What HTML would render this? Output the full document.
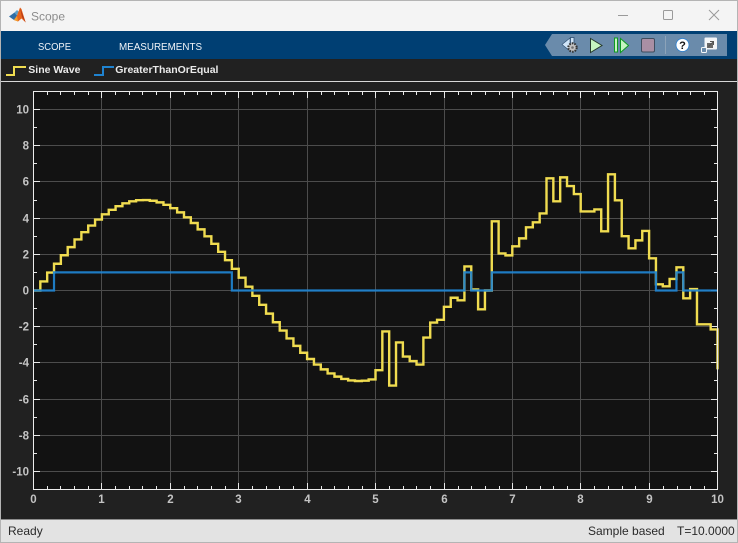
<!DOCTYPE html>
<html><head><meta charset="utf-8"><title>Scope</title>
<style>
html,body{margin:0;padding:0;background:#212121}
body{width:738px;height:543px;overflow:hidden;position:relative;font-family:"Liberation Sans",sans-serif}
svg{position:absolute;left:0;top:0}
</style></head><body>
<svg width="738" height="543" viewBox="0 0 738 543" xmlns="http://www.w3.org/2000/svg" font-family="'Liberation Sans',sans-serif">
<!-- window frame -->
<rect width="738" height="543" fill="#212121"/>
<rect x="0" y="0" width="738" height="31" fill="#f4f4f4"/>
<rect x="0" y="31" width="738" height="28" fill="#003f73"/>
<rect x="0" y="59" width="738" height="22" fill="#212121"/>
<rect x="0" y="81" width="738" height="1" fill="#d8d8d8"/>
<rect x="0" y="519" width="738" height="1" fill="#8c8c8c"/>
<rect x="0" y="520" width="738" height="22" fill="#e3e3e3"/>
<rect x="0.5" y="0.5" width="737" height="542" fill="none" stroke="#b4b4b4"/>

<!-- matlab logo -->
<path d="M9 16.5L14.5 12.5L17.5 15L14 20Z" fill="#2f6ea5"/>
<path d="M14.5 12.5L17 10L19 12L16.5 15.5Z" fill="#5fa0c8"/>
<path d="M14 20L17 15.5L20 7.5L21.5 9L25.7 22.5L21.5 18.5L18 21.5Z" fill="#e8641c"/>
<path d="M20 7.5L25.7 22.5L22 17Z" fill="#b43a17"/>
<path d="M14 20L18 21.5L17 16Z" fill="#f2a02e"/>
<text x="31" y="20.5" font-size="12" fill="#8c8c8c">Scope</text>

<!-- window controls -->
<path d="M618 15.5H628" stroke="#9a9a9a" stroke-width="1"/>
<rect x="663.5" y="10.5" width="9" height="9" fill="none" stroke="#9a9a9a" rx="1"/>
<path d="M709 10L719 20M719 10L709 20" stroke="#9a9a9a" stroke-width="1"/>

<!-- tabs -->
<text x="38" y="50" font-size="10" fill="#f0f4f8" textLength="33" lengthAdjust="spacingAndGlyphs">SCOPE</text>
<text x="119" y="50" font-size="10" fill="#f0f4f8" textLength="83" lengthAdjust="spacingAndGlyphs">MEASUREMENTS</text>

<!-- quick access panel -->
<path d="M552 34H727V56H552L545 45Z" fill="#6a8bab"/>
<path d="M562 44.5L570 38V51Z" fill="#cfe4f7" stroke="#2e4e70" stroke-width="0.6"/>
<rect x="570.5" y="37.5" width="3.5" height="8" fill="#cfe4f7" stroke="#2e4e70" stroke-width="0.8"/>
<circle cx="572.5" cy="47.5" r="4.2" fill="#bcbcbc" stroke="#333" stroke-width="2" stroke-dasharray="1.6 1.1"/>
<circle cx="572.5" cy="47.5" r="2.8" fill="#c4c4c4"/>
<circle cx="572.5" cy="47.5" r="1.3" fill="#707070"/>
<path d="M590.5 38.5L602 45.5L590.5 52.5Z" fill="#c6f5c0" stroke="#26392c" stroke-width="1"/>
<rect x="614.5" y="38" width="3" height="14" fill="#c6f5c0" stroke="#0d9a22" stroke-width="1"/>
<path d="M620.5 38.5L628.5 45.5L620.5 52.5Z" fill="#c6f5c0" stroke="#0d9a22" stroke-width="1"/>
<rect x="641.5" y="38.5" width="13" height="13.5" rx="1.5" fill="#a98fa4" stroke="#3f4d5e" stroke-width="1"/>
<rect x="665" y="36" width="1" height="18" fill="#8ca3b9"/>
<circle cx="682.5" cy="45" r="6.5" fill="#fff" stroke="#2a7fd0" stroke-width="0.8"/>
<text x="682.5" y="49" font-size="11" font-weight="bold" text-anchor="middle" fill="#111">?</text>
<rect x="704.5" y="37.5" width="12.5" height="12" rx="1" fill="#f4f6f8"/>
<rect x="707" y="43" width="6" height="5" fill="#6a6a6a"/>
<path d="M708.5 46.5L713 42M710 41.5H713.5V45" fill="none" stroke="#555" stroke-width="1"/>
<rect x="701.5" y="47.5" width="5" height="5" rx="1" fill="#6a8bab" stroke="#f4f6f8" stroke-width="1"/>

<!-- legend -->
<path d="M6 75H14V67H26" fill="none" stroke="#f0dc50" stroke-width="2"/>
<text x="28.3" y="73" font-size="10.5" font-weight="bold" fill="#eaeaea">Sine Wave</text>
<path d="M94 75H103V67H114" fill="none" stroke="#1f83d0" stroke-width="2"/>
<text x="115.2" y="73" font-size="10.5" font-weight="bold" fill="#eaeaea">GreaterThanOrEqual</text>

<!-- plot area -->
<rect x="33.5" y="91.5" width="684" height="398" fill="#121212"/>
<!-- grid -->
<path d="M101.5 92V489M170.5 92V489M238.5 92V489M307.5 92V489M375.5 92V489M444.5 92V489M512.5 92V489M580.5 92V489M649.5 92V489M34 109.5H717M34 145.5H717M34 181.5H717M34 218.5H717M34 254.5H717M34 290.5H717M34 326.5H717M34 362.5H717M34 399.5H717M34 435.5H717M34 471.5H717" stroke="#4c4c4c" stroke-width="1" fill="none"/>
<!-- ticks -->
<path d="M101.5 92v6M170.5 92v6M238.5 92v6M307.5 92v6M375.5 92v6M444.5 92v6M512.5 92v6M580.5 92v6M649.5 92v6M101.5 489v-6M170.5 489v-6M238.5 489v-6M307.5 489v-6M375.5 489v-6M444.5 489v-6M512.5 489v-6M580.5 489v-6M649.5 489v-6M34 109.5h6M34 145.5h6M34 181.5h6M34 218.5h6M34 254.5h6M34 290.5h6M34 326.5h6M34 362.5h6M34 399.5h6M34 435.5h6M34 471.5h6M717 109.5h-6M717 145.5h-6M717 181.5h-6M717 218.5h-6M717 254.5h-6M717 290.5h-6M717 326.5h-6M717 362.5h-6M717 399.5h-6M717 435.5h-6M717 471.5h-6" stroke="#e8e8e8" stroke-width="1" fill="none"/>
<path d="M47.5 92v3M60.5 92v3M74.5 92v3M88.5 92v3M115.5 92v3M129.5 92v3M142.5 92v3M156.5 92v3M184.5 92v3M197.5 92v3M211.5 92v3M225.5 92v3M252.5 92v3M266.5 92v3M279.5 92v3M293.5 92v3M321.5 92v3M334.5 92v3M348.5 92v3M362.5 92v3M389.5 92v3M403.5 92v3M416.5 92v3M430.5 92v3M458.5 92v3M471.5 92v3M485.5 92v3M499.5 92v3M526.5 92v3M540.5 92v3M553.5 92v3M567.5 92v3M594.5 92v3M608.5 92v3M622.5 92v3M635.5 92v3M663.5 92v3M677.5 92v3M690.5 92v3M704.5 92v3M47.5 489v-3M60.5 489v-3M74.5 489v-3M88.5 489v-3M115.5 489v-3M129.5 489v-3M142.5 489v-3M156.5 489v-3M184.5 489v-3M197.5 489v-3M211.5 489v-3M225.5 489v-3M252.5 489v-3M266.5 489v-3M279.5 489v-3M293.5 489v-3M321.5 489v-3M334.5 489v-3M348.5 489v-3M362.5 489v-3M389.5 489v-3M403.5 489v-3M416.5 489v-3M430.5 489v-3M458.5 489v-3M471.5 489v-3M485.5 489v-3M499.5 489v-3M526.5 489v-3M540.5 489v-3M553.5 489v-3M567.5 489v-3M594.5 489v-3M608.5 489v-3M622.5 489v-3M635.5 489v-3M663.5 489v-3M677.5 489v-3M690.5 489v-3M704.5 489v-3M34 127.5h3M34 163.5h3M34 200.5h3M34 236.5h3M34 272.5h3M34 308.5h3M34 344.5h3M34 380.5h3M34 417.5h3M34 453.5h3M717 127.5h-3M717 163.5h-3M717 200.5h-3M717 236.5h-3M717 272.5h-3M717 308.5h-3M717 344.5h-3M717 380.5h-3M717 417.5h-3M717 453.5h-3" stroke="#e8e8e8" stroke-width="1" fill="none"/>

<!-- signals -->
<g transform="translate(33.5 290.5) scale(68.4 -18.1)" fill="none">
<path vector-effect="non-scaling-stroke" stroke="#f0dc50" stroke-width="2.4" d="M0 0H.1V.499H.2V.993H.3V1.478H.4V1.947H.5V2.397H.6V2.823H.7V3.221H.8V3.587H.9V3.917H1V4.207H1.1V4.456H1.2V4.66H1.3V4.818H1.4V4.927H1.5V4.987H1.6V4.998H1.7V4.958H1.8V4.869H1.9V4.732H2V4.546H2.1V4.316H2.2V4.042H2.3V3.729H2.4V3.377H2.5V2.992H2.6V2.578H2.7V2.137H2.8V1.675H2.9V1.196H3V.706H3.1V.208H3.2V-.292H3.3V-.789H3.4V-1.277H3.5V-1.754H3.6V-2.213H3.7V-2.649H3.8V-3.059H3.9V-3.439H4V-3.784H4.1V-4.091H4.2V-4.358H4.3V-4.581H4.4V-4.758H4.5V-4.888H4.6V-4.968H4.7V-5H4.8V-4.981H4.9V-4.912H5V-4.4H5.1V-2.26H5.2V-5.25H5.3V-2.87H5.4V-3.65H5.5V-3.9H5.6V-4.09H5.7V-2.6H5.8V-1.77H5.9V-1.62H6V-.9H6.1V-.4H6.2V-.54H6.3V1.33H6.4V.06H6.5V-1.04H6.6V0H6.7V3.82H6.8V2.05H6.9V1.94H7V2.44H7.1V2.88H7.2V3.49H7.3V3.77H7.4V4.26H7.5V6.2H7.6V4.93H7.7V6.25H7.8V5.77H7.9V5.33H8V4.37H8.2V4.48H8.3V3.27H8.4V6.42H8.5V4.98H8.6V3H8.7V2.33H8.8V2.77H8.9V3.29H9V1.78H9.1V.34H9.2V.23H9.3V.64H9.4V1.28H9.5V-.43H9.6V.08H9.7V-1.87H9.9V-2.15H10V-4.36"/>
<path vector-effect="non-scaling-stroke" stroke="#1f83d0" stroke-width="2.2" stroke-opacity=".93" d="M0 0H.3V1H2.9V0H6.3V1H6.4V0H6.7V1H9.1V0H9.4V1H9.5V0H10"/>
</g>
<!-- axis box -->
<path d="M33.5 91.5V489.5H717.5V91.5Z" fill="none" stroke="#ececec" stroke-width="1"/>

<!-- y labels -->
<g font-size="11.5" font-weight="bold" fill="#c4c4c4" text-anchor="end">
<text x="29" y="113.5">10</text><text x="29" y="149.5">8</text><text x="29" y="185.5">6</text><text x="29" y="222.5">4</text><text x="29" y="258.5">2</text><text x="29" y="294.5">0</text><text x="29" y="330.5">-2</text><text x="29" y="366.5">-4</text><text x="29" y="403.5">-6</text><text x="29" y="439.5">-8</text><text x="29" y="475.5">-10</text>
</g>
<!-- x labels -->
<g font-size="11.5" font-weight="bold" fill="#c4c4c4" text-anchor="middle">
<text x="33.5" y="503">0</text><text x="101.5" y="503">1</text><text x="170.5" y="503">2</text><text x="238.5" y="503">3</text><text x="307.5" y="503">4</text><text x="375.5" y="503">5</text><text x="444.5" y="503">6</text><text x="512.5" y="503">7</text><text x="580.5" y="503">8</text><text x="649.5" y="503">9</text><text x="717.5" y="503">10</text>
</g>

<!-- status -->
<text x="8" y="535" font-size="12" fill="#2a2a2a">Ready</text>
<text x="588" y="535" font-size="12" fill="#2a2a2a">Sample based</text>
<text x="677" y="535" font-size="12" fill="#2a2a2a">T=10.0000</text>
</svg>
</body></html>
